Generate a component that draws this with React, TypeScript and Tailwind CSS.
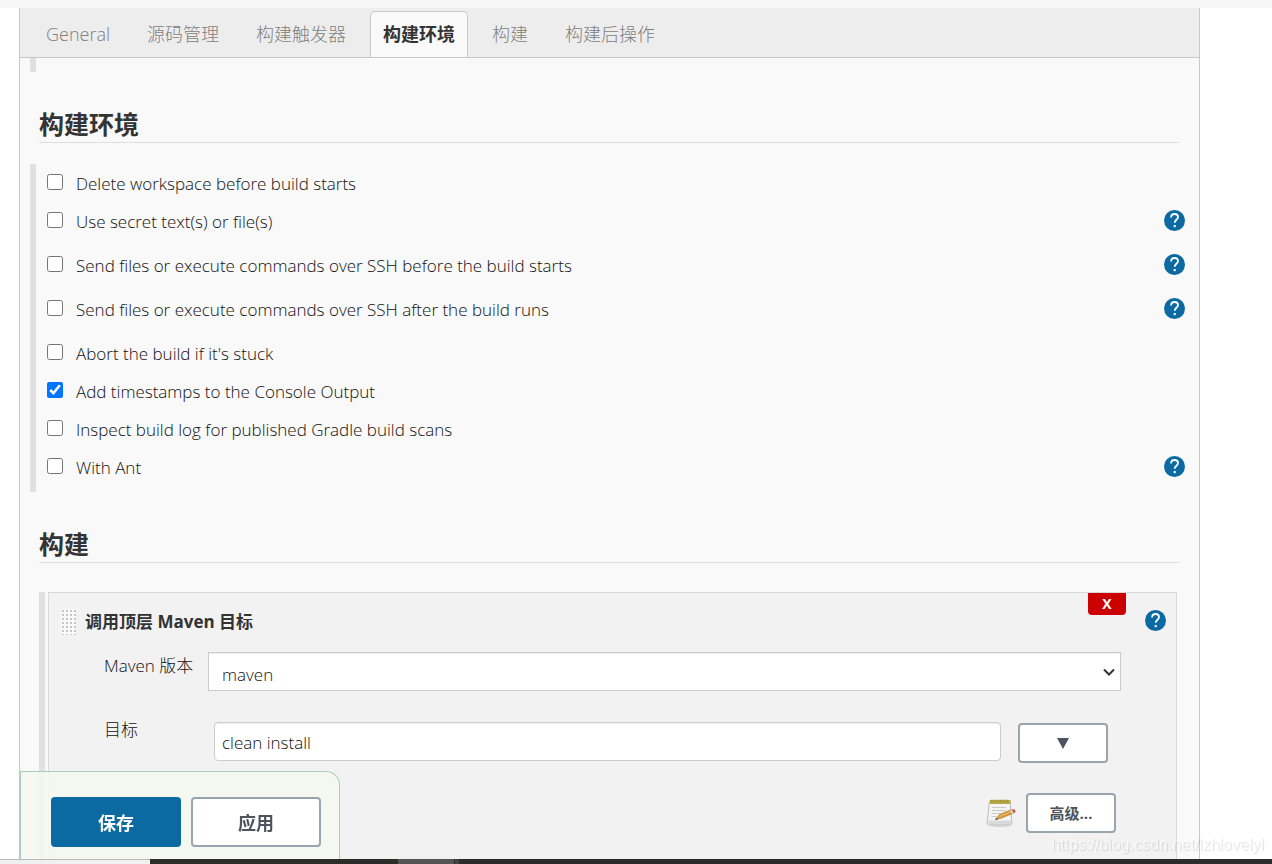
import { useState } from 'react';

const tabs = ['General', '源码管理', '构建触发器', '构建环境', '构建', '构建后操作'];

const envOptions = [
  { id: 'cleanup', label: 'Delete workspace before build starts', help: false, checked: false },
  { id: 'secrets', label: 'Use secret text(s) or file(s)', help: true, checked: false },
  { id: 'ssh-before', label: 'Send files or execute commands over SSH before the build starts', help: true, checked: false },
  { id: 'ssh-after', label: 'Send files or execute commands over SSH after the build runs', help: true, checked: false },
  { id: 'abort', label: "Abort the build if it's stuck", help: false, checked: false },
  { id: 'timestamps', label: 'Add timestamps to the Console Output', help: false, checked: true },
  { id: 'gradle', label: 'Inspect build log for published Gradle build scans', help: false, checked: false },
  { id: 'ant', label: 'With Ant', help: true, checked: false },
];

function HelpButton() {
  return (
    <button type="button" aria-label="Help" className="block h-[22px] w-[22px] shrink-0">
      <svg viewBox="0 0 22 22" className="h-full w-full">
        <circle cx="10.500" cy="11.500" r="10.500" fill="#0b6aa2" />
        <path
          d="M7.100 8.500c0-2.200 1.400-3.500 3.500-3.500s3.400 1.300 3.400 3.200c0 2.500-3.300 2.700-3.300 5.600"
          fill="none"
          stroke="#fff"
          strokeWidth="1.800"
        />
        <rect x="9.700" y="16" width="2" height="2.200" fill="#fff" />
      </svg>
    </button>
  );
}

function NotepadIcon() {
  return (
    <svg viewBox="0 0 30 30" className="h-[30px] w-[30px] shrink-0" aria-hidden="true">
      <ellipse cx="14" cy="27.500" rx="12" ry="1.500" fill="#d4d4d4" />
      <path d="M3.500 3h20.500l2 23q-12 1.500-25 0z" fill="#f4f4f4" stroke="#bcbcbc" strokeWidth="1" />
      <path d="M1.500 22.500h24l.4 3.500q-12 1.500-25 0z" fill="#dadada" />
      <path d="M4 2h20.500v4H4z" fill="#b9ab4c" />
      <path d="M6 1.500v3M9 1.500v3M12 1.500v3M15 1.500v3M18 1.500v3M21 1.500v3" stroke="#94872c" strokeWidth="1" />
      <path d="M6 9.500h14M6 12.500h13M5.500 15.500h9M5.500 18.500h5" stroke="#cacaca" strokeWidth="1" />
      <path d="M9.500 21.500l4-5 12-5 2 3.700-12.500 5z" fill="#d99a36" stroke="#a8752b" strokeWidth=".6" />
      <path d="M13.500 18.500l12-5" stroke="#f3c56d" strokeWidth="1" />
      <path d="M9 21.700l1.800-2 1.200 1.500z" fill="#3b3b3b" />
      <path d="M24 12.200l2-.9 2 3.700-2 .9z" fill="#d4d4d4" />
      <path d="M25.700 11.500q3.300-1.200 3.800 1.500.2 1.500-1.700 2.200z" fill="#dc4b42" />
    </svg>
  );
}

function SectionTitle({ children }: { children: string }) {
  return (
    <h2 className="ml-[19px] mr-5 border-b border-[#dedede] pb-[2px] pt-9 text-[25px] font-bold leading-8 text-[#333]">
      {children}
    </h2>
  );
}

const outlineButton =
  'rounded-[4px] border-2 border-[#98a4ae] bg-white font-bold text-[#4d545d]';

export default function App() {
  const [active, setActive] = useState('构建环境');

  return (
    <div className="flex min-h-screen flex-col bg-white font-['Open_Sans','Noto_Sans_CJK_SC',sans-serif] text-[17px] font-light leading-6 text-[#111]">
      <div className="h-2 bg-[#f7f7f7]" />

      <main className="ml-[19px] mr-[72px] flex flex-1 flex-col border-x border-[#c8c8c8] bg-[#f9f9f9]">
        <nav className="flex h-[50px] items-end gap-[11px] border-b border-[#c8c8c8] bg-[#ededed] pl-[13px]">
          {tabs.map((tab) => (
            <button
              key={tab}
              type="button"
              onClick={() => setActive(tab)}
              className={
                tab === active
                  ? 'h-[46px] rounded-t-[5px] border border-b-0 border-[#c8c8c8] bg-[#f9f9f9] px-3 pb-[2px] text-[18px] font-bold text-[#333]'
                  : 'h-[46px] border border-b-0 border-transparent px-3 pb-[2px] text-[18px] text-[#808080]'
              }
            >
              {tab}
            </button>
          ))}
        </nav>

        <div className="ml-[10px] h-[14px] w-[6px] bg-[#e0e0e0]" />

        <SectionTitle>构建环境</SectionTitle>
        <div className="ml-[10px] mt-[21px] border-l-[6px] border-[#e0e0e0] pl-[11px] pr-[13px]">
          {envOptions.map((option) => (
            <div
              key={option.id}
              className={option.help ? 'flex h-11 items-start justify-between' : 'flex h-[38px] items-start'}
            >
              <label className="flex items-start gap-[13px]">
                <input type="checkbox" defaultChecked={option.checked} className="mt-[10px] h-4 w-4 accent-[#0075ff]" />
                <span className="pt-2">{option.label}</span>
              </label>
              {option.help && (
                <div className="pt-[7px]">
                  <HelpButton />
                </div>
              )}
            </div>
          ))}
        </div>

        <SectionTitle>构建</SectionTitle>
        <div className="ml-[19px] mr-[22px] mt-[29px] flex flex-1 gap-[3px]">
          <div className="w-[6px] bg-[#e0e0e0]" />
          <section className="flex-1 border border-b-0 border-[#d8d8d8] bg-[#f2f2f2] pb-[26px]">
            <div className="flex h-[59px] items-start pl-3 pr-[9px]">
              <svg className="mt-4 h-[26px] w-[15px]" aria-hidden="true">
                <defs>
                  <pattern id="grip" width="4" height="4" patternUnits="userSpaceOnUse">
                    <rect width="4" height="4" fill="#fafafa" />
                    <rect x="1" y="1" width="2" height="2" fill="#c6c6c4" />
                  </pattern>
                </defs>
                <rect width="15" height="26" fill="url(#grip)" />
              </svg>
              <h3 className="ml-[9px] pt-[17px] font-bold text-[#333]">调用顶层 Maven 目标</h3>
              <button
                type="button"
                className="ml-auto h-[22px] w-[38px] rounded-b-[4px] bg-[#c00] text-[14px] font-bold leading-5 text-white"
              >
                X
              </button>
              <div className="ml-[19px] pt-4">
                <HelpButton />
              </div>
            </div>

            <div className="flex items-start pl-[55px] pr-[55px]">
              <label htmlFor="maven-version" className="w-[104px] shrink-0 pt-[2px]">
                Maven 版本
              </label>
              <div className="grid flex-1 items-center">
                <select
                  id="maven-version"
                  className="col-start-1 row-start-1 h-[39px] appearance-none border border-[#ccc] bg-white pl-[13px] pt-[6px] shadow-[inset_0_1px_1px_rgba(0,0,0,0.07)]"
                >
                  <option>maven</option>
                </select>
                <svg
                  viewBox="0 0 12 8"
                  className="pointer-events-none col-start-1 row-start-1 mr-[6px] h-2 w-3 justify-self-end"
                  aria-hidden="true"
                >
                  <path d="M1 1.500l5 5 5-5" fill="none" stroke="#333" strokeWidth="2" />
                </svg>
              </div>
            </div>

            <div className="mt-[27px] flex items-start pl-[55px] pr-[68px]">
              <label htmlFor="goals" className="w-[110px] shrink-0">
                目标
              </label>
              <input
                id="goals"
                type="text"
                defaultValue="clean install"
                className="mt-1 h-[39px] min-w-0 flex-1 rounded-[4px] border border-[#ccc] bg-white px-[7px] pt-[2px] shadow-[inset_0_1px_1px_rgba(0,0,0,0.07)]"
              />
              <button type="button" aria-label="Expand" className={`${outlineButton} ml-[17px] mt-[5px] flex h-10 w-[90px] items-center justify-center`}>
                <svg viewBox="0 0 12 11" className="h-[11px] w-3">
                  <path d="M0 0h12L6 11z" fill="#4d545d" />
                </svg>
              </button>
            </div>

            <div className="mt-[30px] flex items-center justify-end gap-[10px] pr-[60px]">
              <NotepadIcon />
              <button type="button" className={`${outlineButton} h-10 w-[90px] text-[15px]`}>
                高级...
              </button>
            </div>
          </section>
        </div>
      </main>

      <div className="fixed bottom-[5px] left-5 flex gap-[10px] rounded-tr-[14px] border border-b-0 border-[#a9cdb9] bg-[#f5f8ef]/90 pb-3 pl-[30px] pr-[18px] pt-[25px]">
        <button type="button" className="h-[50px] w-[130px] rounded-[4px] bg-[#0b6aa2] pt-[2px] text-[18px] font-bold text-white">
          保存
        </button>
        <button type="button" className={`${outlineButton} h-[50px] w-[130px] pt-[2px] text-[18px]`}>
          应用
        </button>
      </div>

      <div className="pointer-events-none fixed bottom-[7px] right-2 font-['Liberation_Sans',sans-serif] text-[16px] font-normal text-white/60 [text-shadow:1px_1px_1px_rgba(0,0,0,0.12)]">
        https://blog.csdn.net/lzhlovelyl
      </div>

      <footer className="flex h-[5px] bg-[#2c2d2a]">
        <div className="w-[150px] border-t border-[#b8b8b8] bg-[#f0f0f0]" />
        <div className="ml-[248px] w-14 bg-[#555]" />
        <div className="ml-[1px] w-1 bg-[#444]" />
      </footer>
    </div>
  );
}
